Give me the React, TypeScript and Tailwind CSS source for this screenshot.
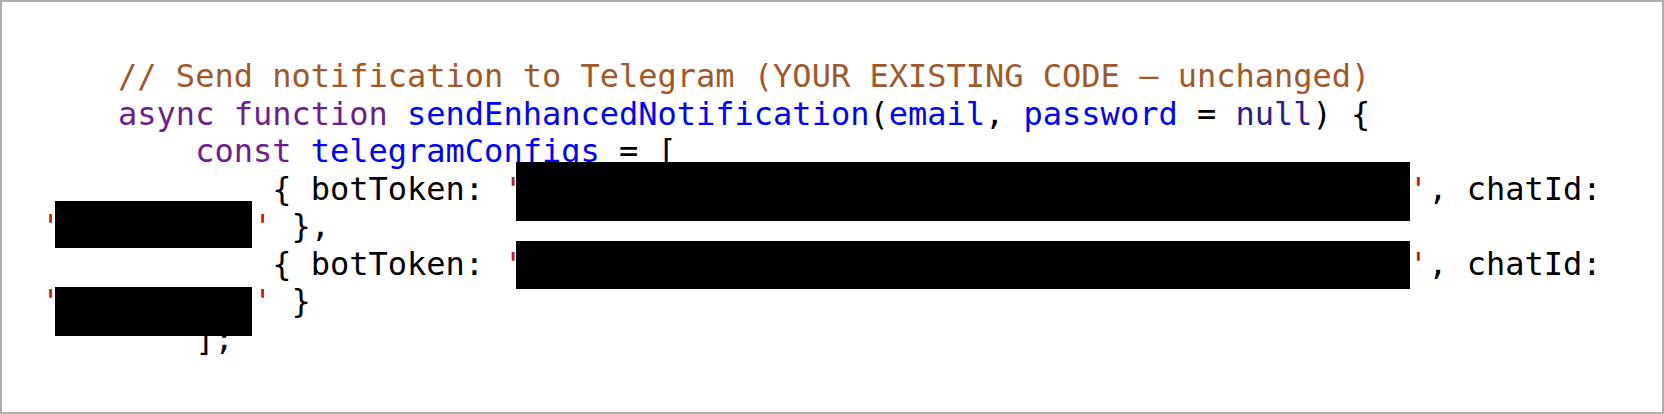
import React from "react";

// redaction bar drawn over the hidden characters
function Redacted({ chars, box }: { chars: number; box: string }) {
  return (
    <span className="relative inline-block">
      <span className="invisible">{"x".repeat(chars)}</span>
      <span className={`absolute bg-black ${box}`} />
    </span>
  );
}

const kw = "text-[#6e1f89]";
const ident = "text-[#0000ff]";
const cmt = "text-[#a0592a]";
const str = "text-[#b5260f]";
const nul = "text-[#2a1e8c]";

export default function App() {
  return (
    <div className="w-[1664px] h-[414px] border-2 border-[#aeaeae] bg-white pl-[39px] pt-[56px] overflow-hidden">
      <div
        className="whitespace-pre text-[32px] leading-[37.5px] text-black"
        style={{ fontFamily: '"DejaVu Sans Mono", "Liberation Mono", monospace' }}
      >
        <div>
          {"    "}
          <span className={cmt}>// Send notification to Telegram (YOUR EXISTING CODE — unchanged)</span>
        </div>
        <div>
          {"    "}
          <span className={kw}>async</span> <span className={kw}>function</span>{" "}
          <span className={ident}>sendEnhancedNotification</span>(
          <span className={ident}>email</span>, <span className={ident}>password</span> ={" "}
          <span className={nul}>null</span>) {"{"}
        </div>
        <div>
          {"        "}
          <span className={kw}>const</span> <span className={ident}>telegramConfigs</span> = [
        </div>
        <div>
          {"            { botToken: "}
          <span className={str}>'</span>
          <Redacted chars={46} box="-left-[7px] -right-[1px] -top-[9px] -bottom-[13px]" />
          <span className={str}>'</span>, chatId:{" "}
        </div>
        <div>
          <span className={str}>'</span>
          <Redacted chars={10} box="-left-[5px] right-[1px] -top-[7px] -bottom-[2px]" />
          <span className={str}>'</span> {"},"}
        </div>
        <div>
          {"            { botToken: "}
          <span className={str}>'</span>
          <Redacted chars={46} box="-left-[7px] -right-[1px] -top-[5px] -bottom-[6px]" />
          <span className={str}>'</span>, chatId:{" "}
        </div>
        <div>
          <span className={str}>'</span>
          <Redacted chars={10} box="-left-[5px] right-[1px] top-[4px] -bottom-[15px]" />
          <span className={str}>'</span> {"}"}
        </div>
        <div>{"        ];"}</div>
      </div>
    </div>
  );
}
